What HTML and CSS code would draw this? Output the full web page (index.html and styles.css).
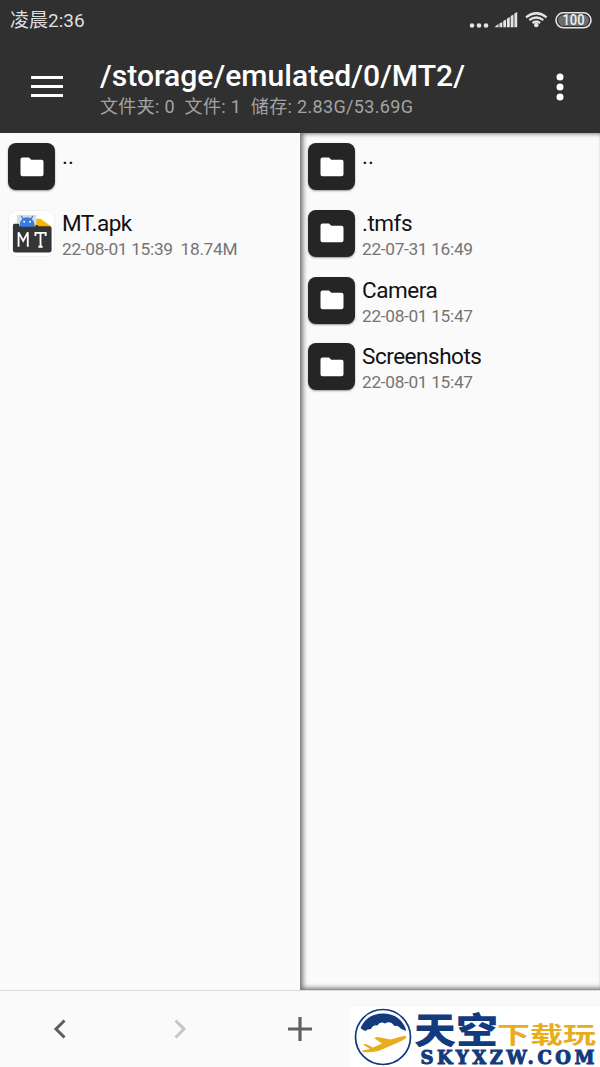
FILE: index.html
```html
<!DOCTYPE html>
<html lang="zh-CN">
<head>
<meta charset="utf-8">
<title>MT2</title>
<link rel="stylesheet" href="styles.css">
</head>
<body>
<svg class="defs" width="0" height="0">
  <symbol id="folder" viewBox="0 0 24 20"><path d="M2.500 0.500H9l2.300 2.300h10.200a2 2 0 0 1 2 2v12.400a2 2 0 0 1-2 2h-19a2 2 0 0 1-2-2V2.500a2 2 0 0 1 2-2z" fill="#fff"/></symbol>
</svg>
<div class="screen">
  <header class="header">
    <div class="status">
      <span class="clock">凌晨2:36</span>
      <svg class="signals" width="124" height="24" viewBox="0 0 124 24">
        <g fill="#e4e4e4">
          <circle cx="5" cy="17.500" r="2.300"/><circle cx="12" cy="17.500" r="2.300"/><circle cx="19" cy="17.500" r="2.300"/>
          <path d="M27.500 19.200l4-3.500v3.500zM32.500 15.500l2.800-1.500v5.200h-2.800zM36.300 13l2.800-1.500v7.700h-2.800zM40 10.500l2.800-1.500v10.200h-2.800zM43.700 8l2.800-1.500v12.700h-2.800zM47.400 5.500l2.800-1.500v15.200h-2.800z"/>
          <circle cx="69.300" cy="17" r="2.300"/>
        </g>
        <g fill="none" stroke="#e4e4e4" stroke-width="2.300">
          <path d="M59 9.300q10.300-8 20.600 0M62.300 12.200q7-5.400 14 0M65.500 15q3.800-3 7.600 0"/>
          <rect x="89" y="4.800" width="35" height="15" rx="7.500" stroke-width="1.600"/>
        </g>
        <rect x="91" y="6.700" width="31" height="11.200" rx="5.600" fill="#6c6c6c"/>
        <text class="battery" x="95.500" y="17.200" textLength="22" lengthAdjust="spacingAndGlyphs">100</text>
      </svg>
    </div>
    <div class="toolbar">
      <svg class="menu" width="32" height="24" viewBox="0 0 32 24"><path d="M0 2.500h32M0 11.500h32M0 20.500h32" stroke="#fff" stroke-width="3.200"/></svg>
      <div class="heading">
        <div class="path">/storage/emulated/0/MT2/</div>
        <div class="summary">文件夹: 0&nbsp; 文件: 1&nbsp; 储存: 2.83G/53.69G</div>
      </div>
      <svg class="more" width="8" height="30" viewBox="0 0 8 30" fill="#fff"><circle cx="4" cy="5" r="3.500"/><circle cx="4" cy="15" r="3.500"/><circle cx="4" cy="25" r="3.500"/></svg>
    </div>
  </header>
  <main class="panes">
    <section class="pane">
      <div class="row"><div class="tile"><svg width="24" height="20"><use href="#folder"/></svg></div><div class="info"><div class="name up">..</div></div></div>
      <div class="row">
        <svg class="apk" width="48" height="48" viewBox="0 0 48 48">
          <rect x=".5" y=".5" width="47" height="47" rx="9" fill="#fff" stroke="#f1f1f1"/>
          <path d="M25 9h8l11 7.500V20H25z" fill="#f8b500"/>
          <path d="M9 5h20v10H9z" fill="#d9dde2"/>
          <path d="M12 15a7.500 7.500 0 0 1 15 0v3H12z" fill="#3b7be0"/>
          <path d="M13.500 6l2.500 3.500M25.500 6L23 9.500" stroke="#3b7be0" stroke-width="1.300"/>
          <circle cx="16.500" cy="12" r="1" fill="#fff"/><circle cx="22.500" cy="12" r="1" fill="#fff"/>
          <path d="M6.500 14h4q.7 0 1 1l.6 2h15.300l1.100-1.500q.3-.5 1-.5l2 1.500h11q2 0 2 2v22.500q0 2.500-2.500 2.500h-34.500q-2.500 0-2.500-2.500V16q0-2 1.500-2z" fill="#343537"/>
          <path d="M10.800 37.500V22.800l4.700 8.700 4.700-8.700v14.700M28 26.500v-3.200h10.500v3.200M33.200 23v14.500M31 37.500h4.400" fill="none" stroke="#fff" stroke-width="1.900"/>
        </svg>
        <div class="info"><div class="name">MT.apk</div><div class="meta">22-08-01 15:39&nbsp; 18.74M</div></div>
      </div>
    </section>
    <section class="pane inset">
      <div class="row"><div class="tile"><svg width="24" height="20"><use href="#folder"/></svg></div><div class="info"><div class="name up">..</div></div></div>
      <div class="row"><div class="tile"><svg width="24" height="20"><use href="#folder"/></svg></div><div class="info"><div class="name">.tmfs</div><div class="meta">22-07-31 16:49</div></div></div>
      <div class="row"><div class="tile"><svg width="24" height="20"><use href="#folder"/></svg></div><div class="info"><div class="name">Camera</div><div class="meta">22-08-01 15:47</div></div></div>
      <div class="row"><div class="tile"><svg width="24" height="20"><use href="#folder"/></svg></div><div class="info"><div class="name">Screenshots</div><div class="meta">22-08-01 15:47</div></div></div>
    </section>
  </main>
  <nav class="bottom">
    <div class="action"><svg width="24" height="24" viewBox="0 0 24 24"><path d="M16.500 3.500L8 12l8.500 8.500" fill="none" stroke="#5e5e5e" stroke-width="3"/></svg></div>
    <div class="action"><svg width="24" height="24" viewBox="0 0 24 24"><path d="M7.500 3.500L16 12l-8.500 8.500" fill="none" stroke="#c6c6c6" stroke-width="3"/></svg></div>
    <div class="action"><svg width="24" height="24" viewBox="0 0 24 24"><path d="M0 12h24M12 0v24" stroke="#606060" stroke-width="3.200"/></svg></div>
  </nav>
  <svg class="brand" width="250" height="60" viewBox="0 0 250 60">
    <rect width="250" height="60" fill="#fff"/>
    <circle cx="33" cy="30" r="27.500" fill="#fff" stroke="#123a7c" stroke-width="1.700"/>
    <path d="M10.500 21Q17 6.500 33 6.500T55.500 21l.5 3q-3-1.500-5.500-2.500-2-3.500-6-2.500-4-6-9.500-2.500-5-3-7.500 2-4.500-1-6.500 3.500-4 0-5.500 2-3-1-5-3z" fill="#123a7c"/>
    <path d="M55.500 29q2.500 1.500-3 4.500L32 42.500q-7 3.500-19 2.500l-1-1.500 8-1.500-7-4.500 3-.5 7 3.500 9-4-8-5.500 3.500-1 13 2.500 11-3q4-1 6 0z" fill="#e8ac1f"/>
    <text class="brand-main" x="64" y="36.500" textLength="84" lengthAdjust="spacingAndGlyphs">天空</text>
    <text class="brand-sub" x="147" y="35.500" textLength="99" lengthAdjust="spacingAndGlyphs">下载玩</text>
    <text class="brand-url" x="70.500" y="57.300" textLength="174" lengthAdjust="spacing">SKYXZW.COM</text>
  </svg>
</div>
</body>
</html>
```
FILE: styles.css
```css
* { box-sizing: border-box; }
body { margin: 0; font-family: Roboto, "Noto Sans CJK SC", sans-serif; }
.defs { position: absolute; }
.screen { position: relative; width: 600px; height: 1067px; display: flex; flex-direction: column; background: #fafafa; overflow: hidden; }
.header { height: 133px; flex: none; background: #303030; color: #fff; }
.status { height: 40px; padding: 0 9px 0 10px; display: flex; align-items: center; justify-content: space-between; }
.clock { font-size: 19px; line-height: 24px; padding-top: 2px; color: #dedede; white-space: nowrap; }
.signals { overflow: visible; }
.battery { font: 500 14.500px Roboto, sans-serif; fill: #f2f2f2; }
.toolbar { height: 93px; padding: 0 36px 0 31px; display: flex; align-items: center; }
.menu { flex: none; }
.heading { margin-left: 37px; padding-top: 6px; flex: 1; white-space: nowrap; }
.path { font-size: 30.100px; font-weight: 500; line-height: 34px; }
.summary { font-size: 18px; letter-spacing: .34px; line-height: 28px; color: #a3a3a3; }
.more { flex: none; }
.panes { flex: 1; display: grid; grid-template-columns: 300px 300px; }
.pane { padding-top: .3px; }
.inset { box-shadow: inset 6px 0 5px -3px #777, inset 0 4px 4px -3px #888, inset 0 -5px 5px -3px #777; }
.row { height: 66.700px; padding: 10px 0 0 8px; display: flex; align-items: flex-start; }
.tile { width: 47px; height: 47px; flex: none; border-radius: 8px; background: #252525; box-shadow: 0 1px 2px #999; display: flex; align-items: center; justify-content: center; }
.apk { flex: none; width: 47px; height: 47px; }
.info { padding-left: 7px; white-space: nowrap; }
.name { font-size: 22.500px; letter-spacing: -.47px; line-height: 26px; color: #111; }
.up { margin-top: 0; letter-spacing: 0; }
.meta { font-size: 17.300px; letter-spacing: -.32px; line-height: 26px; color: #757575; }
.bottom { height: 77px; flex: none; border-top: 1px solid #dcdcdc; display: flex; background: #fafafa; }
.action { width: 120px; display: flex; align-items: center; justify-content: center; }
.brand { position: absolute; left: 350px; bottom: 0; overflow: visible; }
.brand-main { font: 900 36px "Noto Sans CJK SC", sans-serif; fill: #123a7c; }
.brand-sub { font: bold 23px "Noto Sans CJK SC", sans-serif; fill: #e8ac1f; }
.brand-url { font: bold 18px "DejaVu Serif", serif; fill: #123a7c; stroke: #123a7c; stroke-width: 1px; }
```
